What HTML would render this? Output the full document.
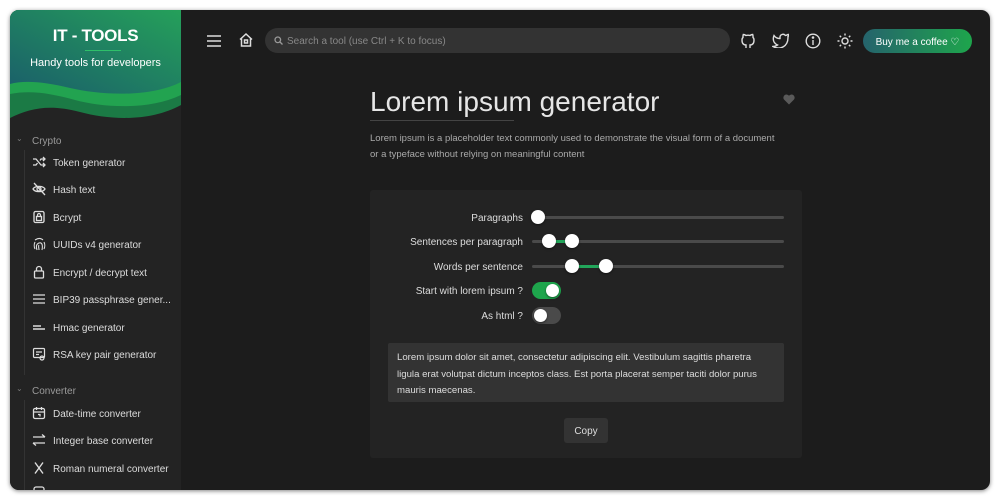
<!DOCTYPE html>
<html><head><style>
*{box-sizing:border-box;margin:0;padding:0}
body{width:1000px;height:500px;background:#fff;font-family:"Liberation Sans",sans-serif;position:relative;overflow:hidden}
.win{position:absolute;left:10px;top:10px;width:980px;height:480px;border-radius:9px;background:#1c1c1c;overflow:hidden;box-shadow:0 1px 4px rgba(0,0,0,.5)}
.side{position:absolute;left:0;top:0;width:171px;height:480px;background:#232323}
.hdr{position:absolute;left:0;top:0;width:171px;height:115px;overflow:hidden}
.t1{position:absolute;left:0;width:171px;text-align:center;color:#fff}
.cat{position:absolute;left:22px;font-size:10px;color:#9a9a9a}
.chev{position:absolute;left:6px;font-size:8px;color:#777}
.vl{position:absolute;left:14px;width:1px;background:#333}
.it{position:absolute;left:22px;font-size:10px;color:#ddd;height:14px;line-height:14px}
.it svg{position:absolute;left:0;top:0}
.it span{position:absolute;left:21px;top:2px;white-space:nowrap}
.top svg{position:absolute}
.search{position:absolute;left:255px;top:18px;width:465px;height:25px;border-radius:13px;background:#333;color:#888;font-size:10px;line-height:27px;padding-left:22px}
.btn{position:absolute;left:853px;top:19px;width:109px;height:24px;border-radius:12px;background:linear-gradient(90deg,#25636c,#1ea54c);color:#fff;font-size:10px;line-height:27px;text-align:center}
.title{position:absolute;left:360px;top:76px;font-size:28px;color:#e6e6e6}
.uline{position:absolute;left:360px;top:110px;width:144px;height:1px;background:#444}
.desc{position:absolute;left:360px;top:121px;width:432px;font-size:9.5px;line-height:16px;color:#aaa}
.card{position:absolute;left:360px;top:180px;width:432px;height:268px;background:#232323;border-radius:3px}
.lbl{position:absolute;right:279px;font-size:10px;color:#ddd;white-space:nowrap}
.rail{position:absolute;left:162px;width:252px;height:3px;background:#4a4a4a;border-radius:2px}
.knob{position:absolute;width:14px;height:14px;border-radius:50%;background:#fff;box-shadow:0 1px 2px rgba(0,0,0,.5)}
.fill{position:absolute;height:3px;background:#22a55a}
.out{position:absolute;left:18px;top:153px;width:396px;height:59px;background:#333;border-radius:2px;padding:7px 9px;font-size:9.6px;line-height:16.5px;color:#ddd}
.copy{position:absolute;left:194px;top:228px;width:44px;height:25px;background:#333;border-radius:3px;color:#ddd;font-size:10px;line-height:27px;text-align:center}
</style></head><body>
<div class="win">
<div class="side">
 <div class="hdr">
  <svg width="171" height="115" style="position:absolute;left:0;top:0">
   <defs><linearGradient id="g" x1="0" y1="1" x2="1" y2="0"><stop offset="0" stop-color="#1a5e6a"/><stop offset="1" stop-color="#25a05a"/></linearGradient></defs>
   <rect width="171" height="115" fill="#232323"/>
   <path d="M0 0H171V95C140 112 100 110 70 102C40 94 20 98 0 108Z" fill="#1b7a45"/>
   <path d="M0 0H171V85C140 100 95 98 65 90C40 83 20 80 0 84Z" fill="#22a350"/>
   <path d="M0 0H171V72C140 88 90 85 60 78C35 72 15 70 0 74Z" fill="url(#g)"/>
  </svg>
  <div class="t1" style="top:16px;font-size:17px;font-weight:bold;letter-spacing:-.3px">IT - TOOLS</div>
  <div style="position:absolute;left:75px;top:40px;width:36px;height:1px;background:#2fc06a"></div>
  <div class="t1" style="top:47px;font-size:11px">Handy tools for developers</div>
 </div>
 <div class="chev" style="top:124px">&#8964;</div>
 <div class="cat" style="top:126px">Crypto</div>
 <div class="vl" style="top:140px;height:225px"></div>
 <div class="chev" style="top:374px">&#8964;</div>
 <div class="cat" style="top:376px">Converter</div>
 <div class="vl" style="top:390px;height:90px"></div>
 <div class="it" style="top:145px"><svg width="14" height="14" fill="none" stroke="#ddd" stroke-width="1.3"><path d="M1 4h3l5 6h4M1 10h3l1.5-2M8 5.5L9 4h4M11 2l2 2-2 2M11 8l2 2-2 2"/></svg><span>Token generator</span></div>
 <div class="it" style="top:172px"><svg width="14" height="14" fill="none" stroke="#ddd" stroke-width="1.3"><path d="M1 7c2-3.5 10-3.5 12 0-2 3.5-10 3.5-12 0z"/><circle cx="7" cy="7" r="2"/><path d="M2 1l11 12"/></svg><span>Hash text</span></div>
 <div class="it" style="top:200px"><svg width="14" height="14" fill="none" stroke="#ddd" stroke-width="1.3"><rect x="2" y="1.5" width="10" height="11" rx="1.5"/><rect x="4.5" y="6.5" width="5" height="4"/><path d="M5.5 6.5V5a1.5 1.5 0 013 0v1.5"/></svg><span>Bcrypt</span></div>
 <div class="it" style="top:227px"><svg width="14" height="14" fill="none" stroke="#ddd" stroke-width="1.1"><path d="M3 12c-1-2-1-5 0-7M5 13c-1-3-1-6 2-7s4 2 3 7M7 13c0-2-1-4 0-5M3 3c3-2 6-2 8 0M12 5c1 2 1 5 0 7"/></svg><span>UUIDs v4 generator</span></div>
 <div class="it" style="top:255px"><svg width="14" height="14" fill="none" stroke="#ddd" stroke-width="1.3"><rect x="2.5" y="6" width="9" height="7" rx="1"/><path d="M4.5 6V4a2.5 2.5 0 015 0v2"/></svg><span>Encrypt / decrypt text</span></div>
 <div class="it" style="top:282px"><svg width="14" height="14" fill="none" stroke="#ddd" stroke-width="1.3"><path d="M1 3h12M1 7h12M1 11h12"/></svg><span>BIP39 passphrase gener...</span></div>
 <div class="it" style="top:310px"><svg width="14" height="14" fill="none" stroke="#ddd" stroke-width="1.5"><path d="M1 6h8M1 9h12"/></svg><span>Hmac generator</span></div>
 <div class="it" style="top:337px"><svg width="14" height="14" fill="none" stroke="#ddd" stroke-width="1.2"><rect x="1.5" y="1.5" width="11" height="9" rx="1"/><path d="M4 5h6M4 7.5h3"/><circle cx="10" cy="11" r="2"/></svg><span>RSA key pair generator</span></div>
 <div class="it" style="top:396px"><svg width="14" height="14" fill="none" stroke="#ddd" stroke-width="1.3"><rect x="1.5" y="2.5" width="11" height="10" rx="1.5"/><path d="M1.5 6h11M4.5 1v3M9.5 1v3M6 8.5h2v2"/></svg><span>Date-time converter</span></div>
 <div class="it" style="top:423px"><svg width="14" height="14" fill="none" stroke="#ddd" stroke-width="1.3"><path d="M1 4h12M10 1.5l3 2.5M1 10h12M4 12.5L1 10"/></svg><span>Integer base converter</span></div>
 <div class="it" style="top:451px"><svg width="14" height="14" fill="none" stroke="#ddd" stroke-width="1.4"><path d="M3 1.5l8 11M11 1.5l-8 11"/></svg><span>Roman numeral converter</span></div>
 <div class="it" style="top:476px"><svg width="14" height="14" fill="none" stroke="#ddd" stroke-width="1.3"><rect x="2" y="1" width="10" height="10" rx="2"/></svg></div>
</div>
<div class="top">
 <svg style="left:197px;top:25px" width="14" height="12" stroke="#ddd" stroke-width="1.6"><path d="M0 1h14M0 6h14M0 11h14"/></svg>
 <svg style="left:228px;top:22px" width="16" height="16" fill="none" stroke="#ddd" stroke-width="1.5"><path d="M2 7.5L8 2l6 5.5M3.5 6v8h9V6"/><rect x="6.5" y="8" width="3" height="3"/></svg>
 <div class="search"><svg style="left:9px;top:8px;position:absolute" width="9" height="9" fill="none" stroke="#999" stroke-width="1.3"><circle cx="3.8" cy="3.8" r="2.8"/><path d="M6 6l2.5 2.5"/></svg>Search a tool (use Ctrl + K to focus)</div>
 <svg style="left:730px;top:23px" width="16" height="16" fill="none" stroke="#ddd" stroke-width="1.4"><path d="M6 15v-3c-3 0-4-2-4-5 0-1 .3-2 1-2.5-.2-1 0-2 .3-3 1 0 2 .5 2.7 1a7 7 0 014 0c.7-.5 1.7-1 2.7-1 .3 1 .5 2 .3 3 .7.5 1 1.5 1 2.5 0 3-1 5-4 5v3"/></svg>
 <svg style="left:762px;top:23px" width="17" height="15" fill="none" stroke="#ddd" stroke-width="1.4"><path d="M16 1.5c-1 .6-1.8.8-2.6 1A3 3 0 008 4.5v1A7 7 0 012 2.5s-3 6.5 3.5 9.5A8 8 0 011 13.5c7 4 15 0 15-9 0-.3 0-.5-.1-.8.7-.7 1-1.5 1.1-2.2z"/></svg>
 <svg style="left:795px;top:23px" width="16" height="16" fill="none" stroke="#ddd" stroke-width="1.4"><circle cx="8" cy="8" r="6.8"/><path d="M8 7v5"/><circle cx="8" cy="4.5" r=".6" fill="#ddd"/></svg>
 <svg style="left:827px;top:23px" width="16" height="16" fill="none" stroke="#ddd" stroke-width="1.4"><circle cx="8" cy="8" r="3"/><path d="M8 0.5v2M8 13.5v2M0.5 8h2M13.5 8h2M2.7 2.7l1.4 1.4M11.9 11.9l1.4 1.4M2.7 13.3l1.4-1.4M11.9 4.1l1.4-1.4"/></svg>
 <div class="btn">Buy me a coffee &#9825;</div>
</div>
<div class="title">Lorem ipsum generator</div>
<div class="uline"></div>
<svg style="position:absolute;left:773px;top:84px" width="12" height="11"><path d="M6 10.5L1 5.5A2.8 2.8 0 016 1.8a2.8 2.8 0 015 3.7z" fill="#5a5a5a"/></svg>
<div class="desc">Lorem ipsum is a placeholder text commonly used to demonstrate the visual form of a document<br>or a typeface without relying on meaningful content</div>
<div class="card">
 <div class="lbl" style="top:23px">Paragraphs</div>
 <div class="rail" style="top:26px"></div><div class="knob" style="left:161px;top:20px"></div>
 <div class="lbl" style="top:47px">Sentences per paragraph</div>
 <div class="rail" style="top:50px"></div><div class="fill" style="left:179px;top:50px;width:23px"></div>
 <div class="knob" style="left:172px;top:44px"></div><div class="knob" style="left:195px;top:44px"></div>
 <div class="lbl" style="top:72px">Words per sentence</div>
 <div class="rail" style="top:75px"></div><div class="fill" style="left:202px;top:75px;width:34px"></div>
 <div class="knob" style="left:195px;top:69px"></div><div class="knob" style="left:229px;top:69px"></div>
 <div class="lbl" style="top:96px">Start with lorem ipsum ?</div>
 <div style="position:absolute;left:162px;top:92px;width:29px;height:17px;border-radius:9px;background:#1ea54c"></div><div class="knob" style="left:176px;top:94px;width:13px;height:13px"></div>
 <div class="lbl" style="top:121px">As html ?</div>
 <div style="position:absolute;left:162px;top:117px;width:29px;height:17px;border-radius:9px;background:#4a4a4a"></div><div class="knob" style="left:164px;top:119px;width:13px;height:13px"></div>
 <div class="out">Lorem ipsum dolor sit amet, consectetur adipiscing elit. Vestibulum sagittis pharetra ligula erat volutpat dictum inceptos class. Est porta placerat semper taciti dolor purus mauris maecenas.</div>
 <div class="copy">Copy</div>
</div>
</div>
</body></html>
